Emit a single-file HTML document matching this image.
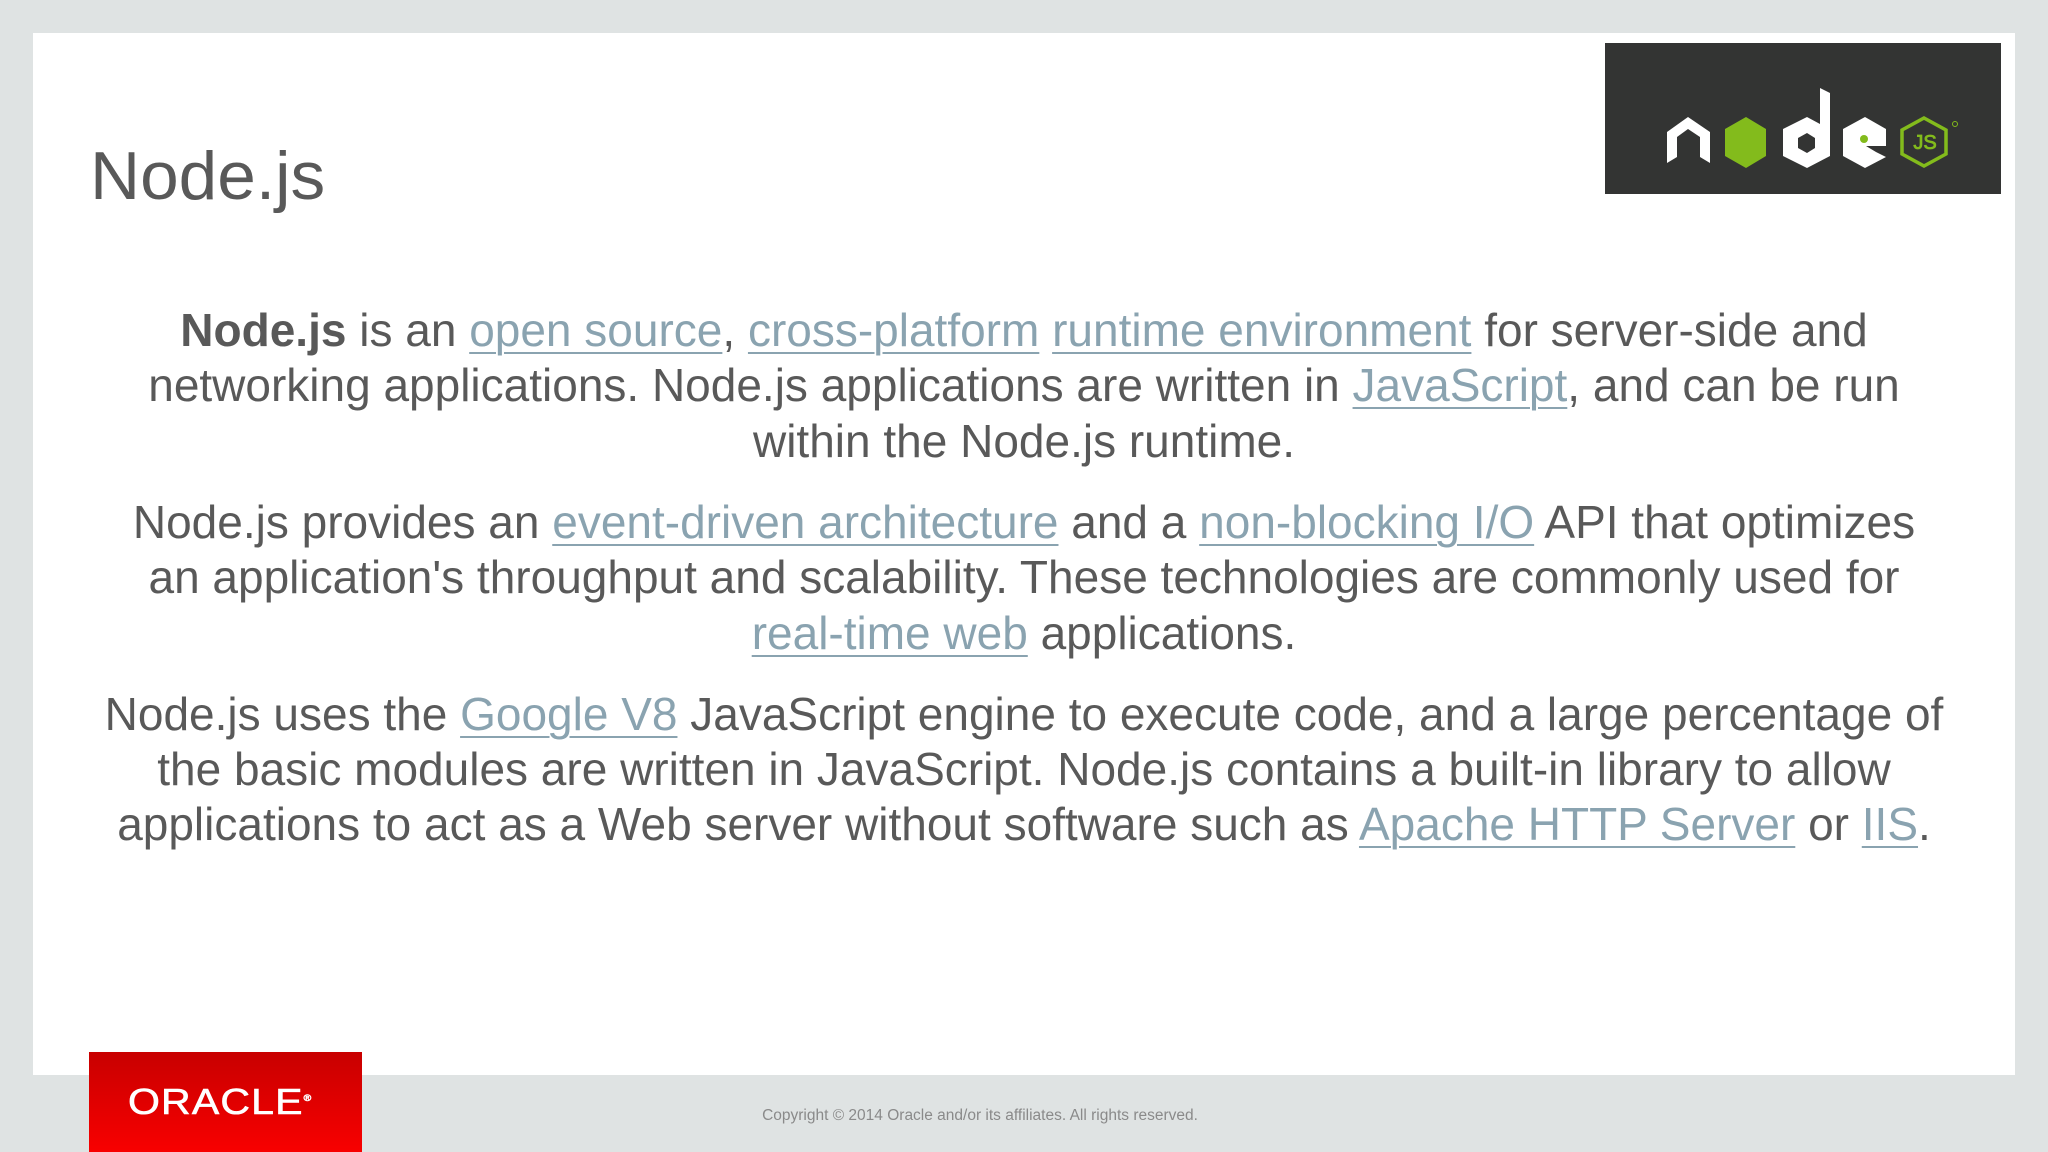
<!DOCTYPE html>
<html><head><meta charset="utf-8"><style>
html,body{margin:0;padding:0}
body{width:2048px;height:1152px;background:#dfe3e3;position:relative;overflow:hidden;font-family:"Liberation Sans",sans-serif}
#panel{position:absolute;left:33px;top:33px;width:1982px;height:1042px;background:#fff}
#title{position:absolute;left:90px;top:136px;font-size:68px;color:#595959;line-height:80px;transform:scaleX(1.02);transform-origin:left}
#logo{position:absolute;left:1605px;top:43px;width:396px;height:151px;background:#333433}
#body{position:absolute;left:0;width:2048px;top:0;color:#595959;font-size:46px}
.l{position:absolute;left:0;width:2048px;text-align:center;white-space:nowrap;line-height:56px;transform:scaleX(1.0);transform-origin:1022px 0}
a{color:#8aa3b0;text-decoration:underline;text-decoration-thickness:2px;text-underline-offset:6px}
#oracle{position:absolute;left:89px;top:1052px;width:273px;height:100px;background:linear-gradient(#c80000,#f80000)}
#oracle span{position:absolute;left:39px;top:29px;color:#fff;font-size:36px;letter-spacing:1px;transform:scaleX(1.14);transform-origin:left;-webkit-text-stroke:0.6px #fff}
#copy{position:absolute;left:0;width:1960px;text-align:center;top:1107px;font-size:15.5px;color:#8a8a8a;transform:scaleX(1.0);transform-origin:980px 0}
</style></head><body>
<div id="panel"></div>
<div id="title">Node.js</div>
<div id="logo"><svg width="396" height="151" viewBox="1605 43 396 151">
<path d="M1667 163 V132 L1688 117 L1710 132 V163 L1700 157 V137 L1688 129 L1677 137 V157 Z" fill="#fff"/>
<path d="M1746 117 L1766 129 V156 L1746 168 L1725 156 V129 Z" fill="#83bb1c"/>
<path d="M1820 88 L1830 93 V156 L1807 168 L1783 156 V129 L1807 117 L1820 124 Z M1807 133 L1798 138 V148 L1807 153 L1815 148 V138 Z" fill="#fff" fill-rule="evenodd"/>
<path d="M1865 117 L1886 129 V146 L1866 146 L1876 152 L1886 157 L1865 168 L1843 156 V129 Z" fill="#fff"/>
<circle cx="1864" cy="139" r="4" fill="#83bb1c"/>
<path d="M1924 118 L1946 130 V154 L1924 166 L1902 154 V130 Z" fill="none" stroke="#83bb1c" stroke-width="3.5"/>
<text x="1925" y="149" font-size="20" fill="#83bb1c" text-anchor="middle" font-family="Liberation Sans,sans-serif" stroke="#83bb1c" stroke-width="0.8">JS</text>
<circle cx="1955" cy="124" r="2.5" fill="none" stroke="#83bb1c" stroke-width="1"/>
</svg></div>
<div id="body">
<div class="l" style="top:302px"><b>Node.js</b> is an <a>open source</a>, <a>cross-platform</a> <a>runtime environment</a> for server-side and</div>
<div class="l" style="top:357px">networking applications. Node.js applications are written in <a>JavaScript</a>, and can be run</div>
<div class="l" style="top:413px">within the Node.js runtime.</div>
<div class="l" style="top:494px">Node.js provides an <a>event-driven architecture</a> and a <a>non-blocking I/O</a> API that optimizes</div>
<div class="l" style="top:549px">an application's throughput and scalability. These technologies are commonly used for</div>
<div class="l" style="top:605px"><a>real-time web</a> applications.</div>
<div class="l" style="top:686px">Node.js uses the <a>Google V8</a> JavaScript engine to execute code, and a large percentage of</div>
<div class="l" style="top:741px">the basic modules are written in JavaScript. Node.js contains a built-in library to allow</div>
<div class="l" style="top:796px">applications to act as a Web server without software such as <a>Apache HTTP Server</a> or <a>IIS</a>.</div>
</div>
<div id="oracle"><span>ORACLE<sup style="font-size:9px">®</sup></span></div>
<div id="copy">Copyright © 2014 Oracle and/or its affiliates. All rights reserved.</div>
</body></html>
